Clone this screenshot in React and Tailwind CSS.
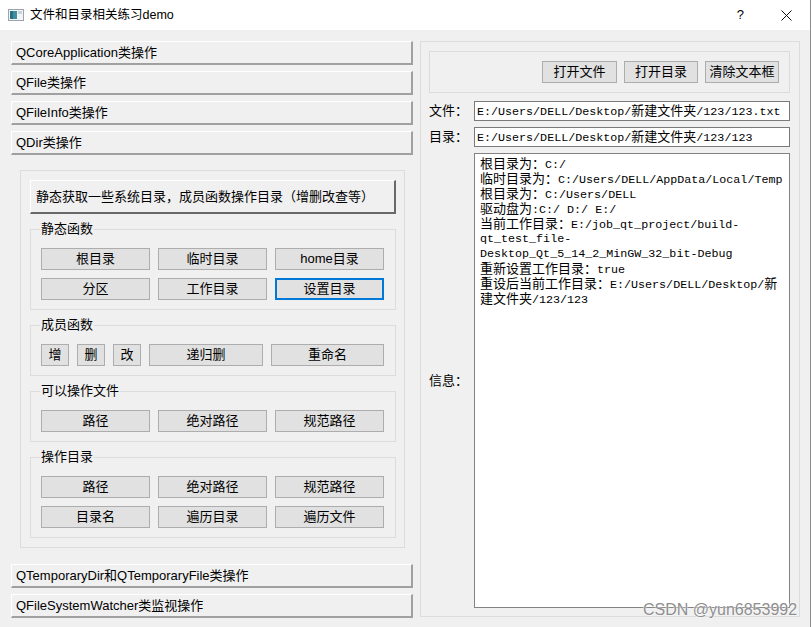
import React from 'react';

const sans = "font-['Liberation_Sans','Noto_Sans_CJK_SC',sans-serif]";
const mono = "font-['Liberation_Mono','Noto_Sans_CJK_SC',monospace]";

// split a line so CJK runs get the wider size, like SimSun does
const MonoLine = ({ text }) => {
  const parts = text.split(/([\u3000-\u9fff\uff00-\uffef]+)/);
  return (
    <div className="h-[15px] leading-[15px] whitespace-pre">
      {parts.map((p, i) =>
        /[\u3000-\u9fff\uff00-\uffef]/.test(p) ? (
          <span key={i} className="text-[13px]">{p}</span>
        ) : (
          <span key={i}>{p}</span>
        )
      )}
    </div>
  );
};

const ToolTab = ({ label }) => (
  <div className="h-[24px] w-[402px] flex items-center pl-[4px] text-[13px] text-black bg-[#f0f0f0] border-t border-l border-white border-b-2 border-r-2 border-b-[#a0a0a0] border-r-[#a0a0a0]">
    {label}
  </div>
);

const Btn = ({ label, w, focus }) => (
  <div
    className={
      'h-[22px] flex items-center justify-center text-[13px] bg-[#e1e1e1] ' +
      (focus ? 'border-2 border-[#0078d7]' : 'border border-[#adadad]')
    }
    style={w ? { width: w } : undefined}
  >
    {label}
  </div>
);

const Group = ({ title, children, className }) => (
  <div className={'relative w-[366px] border border-[#dcdcdc] pt-[18px] pb-[9px] pl-[10px] ' + (className || '')}>
    <span className="absolute -top-[9px] left-[9px] px-[1px] bg-[#f0f0f0] text-[13px] leading-[16px]">{title}</span>
    {children}
  </div>
);

const Grid3 = ({ items, focusIdx }) => (
  <div className="grid grid-cols-[109px_109px_109px] gap-x-[8px] gap-y-[8px]">
    {items.map((t, i) => (
      <Btn key={i} label={t} focus={i === focusIdx} />
    ))}
  </div>
);

const lines = [
  '根目录为：C:/',
  '临时目录为：C:/Users/DELL/AppData/Local/Temp',
  '根目录为：C:/Users/DELL',
  '驱动盘为:C:/ D:/ E:/',
  '当前工作目录：E:/job_qt_project/build-',
  'qt_test_file-',
  'Desktop_Qt_5_14_2_MinGW_32_bit-Debug',
  '重新设置工作目录：true',
  '重设后当前工作目录：E:/Users/DELL/Desktop/新',
  '建文件夹/123/123',
];

export default function App() {
  return (
    <div className={'relative w-[812px] h-[627px] flex bg-white overflow-hidden text-black ' + sans}>
      <div className="w-[811px] h-[627px] flex flex-col border-r border-[#8c8c8c]">
        {/* title bar */}
        <div className="h-[30px] bg-white flex items-center">
          <svg width="16" height="12" viewBox="0 0 16 12" className="ml-[8px]">
            <rect x="0.5" y="0.5" width="15" height="11" fill="#f4f4f4" stroke="#9aa4ad" />
            <rect x="2" y="2" width="7" height="8" fill="#3f8fa0" />
            <rect x="2" y="2" width="3" height="8" fill="#2a6f86" />
            <rect x="10" y="2" width="4" height="3" fill="#c9d3da" />
          </svg>
          <span className="ml-[6px] text-[12.5px]">文件和目录相关练习demo</span>
          <span className="ml-auto mr-[37px] text-[13px]">?</span>
          <svg width="11" height="11" viewBox="0 0 11 11" className="mr-[18px]">
            <path d="M0.5 0.5 L10.5 10.5 M10.5 0.5 L0.5 10.5" stroke="#111" strokeWidth="1" />
          </svg>
        </div>

        {/* body */}
        <div className="flex-1 flex bg-[#f0f0f0]">
          {/* toolbox */}
          <div className="w-[413px] pl-[11px] pt-[11px] flex flex-col gap-[6px]">
            <ToolTab label="QCoreApplication类操作" />
            <ToolTab label="QFile类操作" />
            <ToolTab label="QFileInfo类操作" />
            <ToolTab label="QDir类操作" />

            <div className="ml-[9px] mt-[9px] w-[385px] h-[378px] border border-[#dcdcdc] pt-[9px] pl-[9px]">
              <div className="w-[366px] h-[34px] flex items-center pl-[5px] text-[13px] bg-[#f0f0f0] border-t border-l border-white border-b-2 border-r-2 border-b-[#696969] border-r-[#696969]">
                静态获取一些系统目录，成员函数操作目录（增删改查等）
              </div>

              <Group title="静态函数" className="mt-[15px]">
                <Grid3 items={['根目录', '临时目录', 'home目录', '分区', '工作目录', '设置目录']} focusIdx={5} />
              </Group>

              <Group title="成员函数" className="mt-[15px]">
                <div className="flex gap-[8px]">
                  <Btn label="增" w={28} />
                  <Btn label="删" w={28} />
                  <Btn label="改" w={28} />
                  <Btn label="递归删" w={114} />
                  <Btn label="重命名" w={113} />
                </div>
              </Group>

              <Group title="可以操作文件" className="mt-[15px]">
                <Grid3 items={['路径', '绝对路径', '规范路径']} />
              </Group>

              <Group title="操作目录" className="mt-[15px]">
                <Grid3 items={['路径', '绝对路径', '规范路径', '目录名', '遍历目录', '遍历文件']} />
              </Group>
            </div>

            <div className="mt-[10px]">
              <ToolTab label="QTemporaryDir和QTemporaryFile类操作" />
            </div>
            <ToolTab label="QFileSystemWatcher类监视操作" />
          </div>

          {/* right panel */}
          <div className="ml-[7px] mt-[11px] w-[380px] h-[576px] border border-[#dcdcdc] pt-[9px] pl-[8px] pr-[9px] pb-[8px] flex flex-col">
            <div className="h-[42px] border border-[#dcdcdc] flex items-center justify-end gap-[7px] pr-[10px]">
              <Btn label="打开文件" w={75} />
              <Btn label="打开目录" w={74} />
              <Btn label="清除文本框" w={74} />
            </div>

            <div className="mt-[8px] flex items-center h-[20px]">
              <span className="w-[45px] text-[13px]">文件：</span>
              <div className={'flex-1 h-[20px] bg-white border border-[#7a7a7a] pl-[2px] flex items-center text-[11.7px] ' + mono}>
                <MonoLine text="E:/Users/DELL/Desktop/新建文件夹/123/123.txt" />
              </div>
            </div>
            <div className="mt-[6px] flex items-center h-[20px]">
              <span className="w-[45px] text-[13px]">目录：</span>
              <div className={'flex-1 h-[20px] bg-white border border-[#7a7a7a] pl-[2px] flex items-center text-[11.7px] ' + mono}>
                <MonoLine text="E:/Users/DELL/Desktop/新建文件夹/123/123" />
              </div>
            </div>

            <div className="mt-[6px] flex-1 flex items-center">
              <span className="w-[45px] text-[13px]">信息：</span>
              <div className={'flex-1 h-full bg-white border border-[#828282] pl-[5px] pt-[3px] text-[11.7px] ' + mono}>
                {lines.map((l, i) => (
                  <MonoLine key={i} text={l} />
                ))}
              </div>
            </div>
          </div>
        </div>
      </div>

      <span className="absolute left-[643px] top-[598px] text-[16px] text-[#8e8e8e] [text-shadow:0_0_1px_#fff,0_0_2px_#fff] font-['Liberation_Sans',sans-serif]">
        CSDN @yun6853992
      </span>
    </div>
  );
}
